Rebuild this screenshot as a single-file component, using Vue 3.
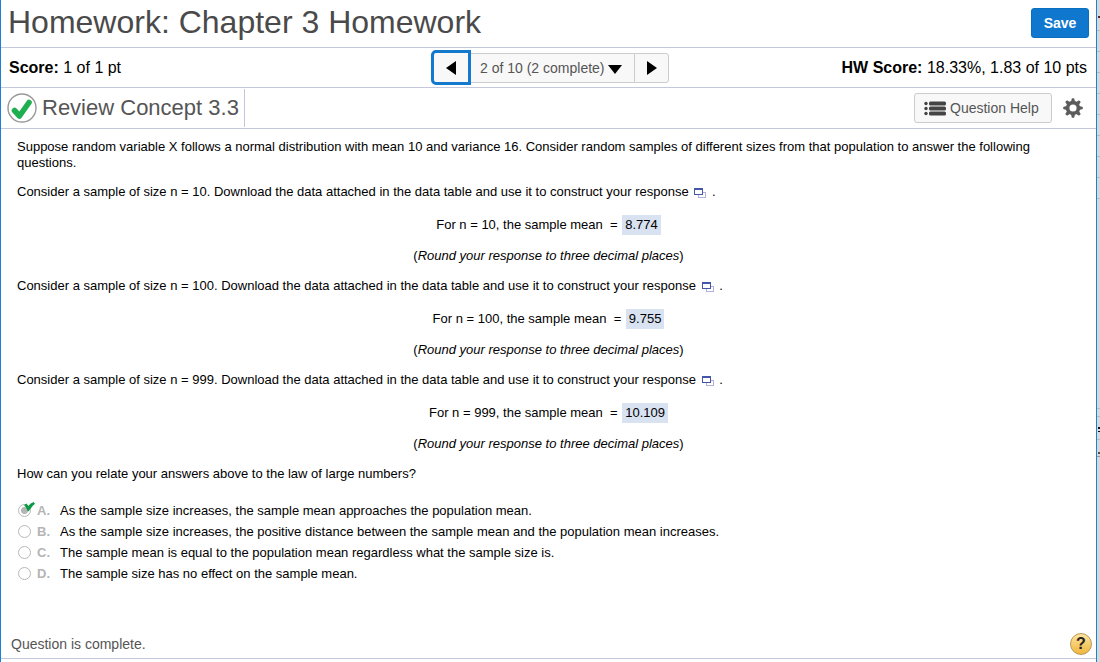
<script setup>
import { ref } from 'vue'

const samples = [
  { n: 10, mean: '8.774' },
  { n: 100, mean: '9.755' },
  { n: 999, mean: '10.109' },
]

const choices = [
  { letter: 'A', text: 'As the sample size increases, the sample mean approaches the population mean.' },
  { letter: 'B', text: 'As the sample size increases, the positive distance between the sample mean and the population mean increases.' },
  { letter: 'C', text: 'The sample mean is equal to the population mean regardless what the sample size is.' },
  { letter: 'D', text: 'The sample size has no effect on the sample mean.' },
]

const answer = ref('A')
</script>

<template>
  <div class="window">
    <main class="page">
      <header class="bar title-bar">
        <h1>Homework: Chapter 3 Homework</h1>
        <button class="save" type="button">Save</button>
      </header>

      <div class="bar score-bar">
        <p class="score"><strong>Score:</strong> 1 of 1 pt</p>
        <nav class="pager" aria-label="Questions">
          <button class="prev" type="button" aria-label="Previous question">
            <svg width="10" height="14" viewBox="0 0 10 14"><path d="M10 0v14L0 7z" /></svg>
          </button>
          <div class="picker">
            <select aria-label="Question">
              <option>2 of 10 (2 complete)</option>
            </select>
            <svg class="caret" width="14" height="9" viewBox="0 0 14 9"><path d="M0 0h14L7 9z" /></svg>
          </div>
          <button class="next" type="button" aria-label="Next question">
            <svg width="10" height="14" viewBox="0 0 10 14"><path d="M0 0v14l10-7z" /></svg>
          </button>
        </nav>
        <p class="score total"><strong>HW Score:</strong> 18.33%, 1.83 of 10 pts</p>
      </div>

      <div class="bar question-bar">
        <div class="question-name">
          <svg width="30" height="30" viewBox="0 0 30 30">
            <circle cx="15" cy="15" r="14" fill="#fff" stroke="#999" stroke-width="1.4" />
            <path d="M7.500 17.500l5 5.500L22 9.500" fill="none" stroke="#1faf50" stroke-width="5.600" stroke-linecap="round" stroke-linejoin="round" />
          </svg>
          <h2>Review Concept 3.3</h2>
        </div>
        <div class="tools">
          <button class="help" type="button">
            <svg width="22" height="15" viewBox="0 0 22 15" fill="#444">
              <circle cx="2" cy="2.5" r="1.7" /><circle cx="2" cy="7.5" r="1.7" /><circle cx="2" cy="12.5" r="1.7" />
              <rect x="5" y="0.5" width="17" height="4" rx="1.5" />
              <rect x="5" y="5.5" width="17" height="4" rx="1.5" />
              <rect x="5" y="10.5" width="17" height="4" rx="1.5" />
            </svg>
            Question Help
          </button>
          <button class="gear" type="button" aria-label="Settings">
            <svg width="20" height="20" viewBox="0 0 20 20">
              <g fill="#5c5c5c">
                <path v-for="a in 8" :key="a" d="M8 4l.7-3.2q.1-.6.7-.6h1.2q.6 0 .7.6L12 4z" :transform="`rotate(${a * 45} 10 10)`" />
              </g>
              <circle cx="10" cy="10" r="5.400" fill="none" stroke="#5c5c5c" stroke-width="3.600" />
            </svg>
          </button>
        </div>
      </div>

      <article class="body">
        <p>
          Suppose random variable X follows a normal distribution with mean 10 and variance 16. Consider random samples
          of different sizes from that population to answer the following questions.
        </p>
        <section v-for="s in samples" :key="s.n">
          <p>
            Consider a sample of size n = {{ s.n }}. Download the data attached in the data table and use it to
            construct your response
            <a class="data" href="#" aria-label="Data table"><svg width="12" height="10" viewBox="0 0 12 10">
              <rect x="4.5" y="4.5" width="7" height="5" fill="#fff" stroke="#b0b2dc" />
              <rect x="0.5" y="1.5" width="8" height="5" fill="#fff" stroke="#4556a8" />
              <path d="M0 1h9" stroke="#4556a8" stroke-width="2" />
            </svg></a>
            .
          </p>
          <p class="equation">For n = {{ s.n }}, the sample mean&nbsp; = <span class="value">{{ s.mean }}</span></p>
          <p class="hint">(<em>Round your response to three decimal places</em>)</p>
        </section>
        <p>How can you relate your answers above to the law of large numbers?</p>

        <div class="choices" role="radiogroup" aria-label="Answer choices">
          <label v-for="c in choices" :key="c.letter" class="choice">
            <span class="mark">
              <input v-model="answer" type="radio" name="answer" :value="c.letter" disabled />
              <svg v-if="answer === c.letter" class="tick" width="11" height="10" viewBox="0 0 11 10">
                <path d="M0 3L2.500 1.500 4.300 4Q6.500 1.200 9.500 0L11 1.800Q7.500 4.500 5 9Q4.300 9.500 3.600 9Q2.500 5.500 0 3z" fill="#0b9b45" />
              </svg>
            </span>
            <b>{{ c.letter }}.</b>
            <span>{{ c.text }}</span>
          </label>
        </div>
      </article>

      <footer class="status">
        <p>Question is complete.</p>
        <button class="info" type="button" aria-label="Help">?</button>
      </footer>
    </main>
    <div class="behind"></div>
  </div>
</template>

<style>
body {
  margin: 0;
  background: #fff;
}
</style>

<style scoped>
.window {
  display: flex;
  min-height: 100vh;
  font-family: "Liberation Sans", Arial, sans-serif;
  color: #000;
}
.page {
  flex: 1;
  display: flex;
  flex-direction: column;
  box-sizing: border-box;
  border-left: 1px solid #1a80d8;
  border-right: 1px solid #1a80d8;
  padding-bottom: 3px;
}
.behind {
  width: 3px;
  background:
    linear-gradient(#111 0 0) 1px 427px / 2px 2px no-repeat,
    linear-gradient(#111 0 0) 1px 431px / 2px 1px no-repeat,
    linear-gradient(#5c5430 0 0) 1px 452px / 2px 2px no-repeat,
    linear-gradient(#602020 0 0) 1px 16px / 2px 2px no-repeat,
    linear-gradient(#b4bac8 0 0) 0 408px / 3px 1px no-repeat,
    linear-gradient(#b4bac8 0 0) 0 416px / 3px 1px no-repeat,
    linear-gradient(#b4bac8 0 0) 0 439px / 3px 1px no-repeat,
    linear-gradient(#999 0 0) 0 456px / 3px 1px no-repeat,
    repeating-linear-gradient(#d8d8d8 0 20px, #b4bac8 20px 21px) 0 10px / 3px 200px no-repeat,
    #d8d8d8;
}
h1, h2, p {
  margin: 0;
  font-weight: normal;
}
button, select {
  font-family: inherit;
  font-size: 14px;
}
.bar {
  display: flex;
  align-items: center;
  justify-content: space-between;
  box-sizing: border-box;
  border-bottom: 1px solid #c5c8dc;
}
.title-bar {
  height: 48px;
  padding: 0 7px;
}
h1 {
  font-size: 32px;
  line-height: 36px;
  padding-bottom: 4px;
  color: #4a4a4a;
}
.save {
  width: 58px;
  height: 30px;
  margin-bottom: 1px;
  padding: 0;
  border: 1px solid #0b6fc0;
  border-radius: 3px;
  background: #0f78ce;
  color: #fff;
  font-weight: bold;
}
.score-bar {
  display: grid;
  grid-template-columns: 1fr auto 1fr;
  height: 40px;
  padding: 0 5px 0 8px;
}
.score {
  font-size: 16px;
  line-height: 20px;
}
.total {
  padding-right: 4px;
  text-align: right;
}
.pager {
  display: flex;
  align-items: center;
}
.pager button {
  display: flex;
  align-items: center;
  justify-content: center;
  box-sizing: border-box;
  padding: 0;
  background: #f8f8f8;
}
.pager .prev {
  width: 40px;
  height: 35px;
  border: 3px solid #1279cc;
  border-radius: 5px 0 0 5px;
}
.pager .next {
  width: 35px;
  height: 30px;
  border: 1px solid #ccc;
  border-radius: 0 3px 3px 0;
}
.picker {
  position: relative;
  display: flex;
}
.picker select {
  appearance: none;
  box-sizing: border-box;
  width: 163px;
  height: 30px;
  padding: 0 24px 0 9px;
  border: 1px solid #ccc;
  border-width: 1px 0;
  border-radius: 0;
  background: #f8f8f8;
  color: #555;
}
.caret {
  position: absolute;
  right: 12px;
  top: 12px;
  pointer-events: none;
}
.question-bar {
  height: 41px;
  padding: 0 13px 0 6px;
}
.question-name {
  display: flex;
  align-items: center;
  gap: 5px;
  height: 38px;
  padding-right: 5px;
  border-right: 1px solid #c5c8dc;
}
h2 {
  font-size: 22px;
  line-height: 26px;
  color: #555;
}
.tools {
  display: flex;
  align-items: center;
  gap: 11px;
}
.help {
  display: flex;
  align-items: center;
  gap: 4px;
  width: 138px;
  height: 30px;
  padding: 0 0 0 9px;
  border: 1px solid #ccc;
  border-radius: 3px;
  background: #f8f8f8;
  color: #555;
}
.gear {
  display: flex;
  padding: 0;
  border: 0;
  background: none;
}
.body {
  flex: 1;
  padding: 10px 16px 0;
  font-size: 13px;
  line-height: 16px;
}
section {
  margin: 13px 0 14px;
}
.data {
  margin: 0 2px;
}
.data svg {
  vertical-align: -2px;
}
.equation, .hint {
  text-align: center;
}
.equation {
  margin: 15px 0 13px;
  line-height: 20px;
}
.value {
  display: inline-block;
  margin-left: 1px;
  padding: 0 3px;
  background: #d9e2f1;
}
.choices {
  margin-top: 18px;
}
.choice {
  display: flex;
  align-items: center;
  height: 21px;
}
.choice b {
  width: 23px;
  color: #b5b5b5;
}
.mark {
  position: relative;
  display: flex;
  margin: 0 6px 0 1px;
}
.mark input {
  appearance: none;
  box-sizing: border-box;
  width: 13px;
  height: 13px;
  margin: 0;
  border: 1px solid #b8b8b8;
  border-radius: 50%;
  background: #fff;
}
.mark input:checked {
  background: radial-gradient(circle, #b5b5b5 0 3px, #fff 4px);
}
.tick {
  position: absolute;
  left: 6px;
  top: -2px;
}
.status {
  display: flex;
  align-items: center;
  justify-content: space-between;
  height: 28px;
  padding: 0 4px 0 10px;
  border-bottom: 1px solid #c5c8dc;
  font-size: 14px;
  color: #555;
}
.info {
  width: 22px;
  height: 22px;
  padding: 0;
  border: 1px solid #b99a5b;
  border-radius: 50%;
  background: linear-gradient(#fde5a0, #f0b63c);
  color: #222;
  font-size: 16px;
  font-weight: bold;
  line-height: 20px;
}
</style>
